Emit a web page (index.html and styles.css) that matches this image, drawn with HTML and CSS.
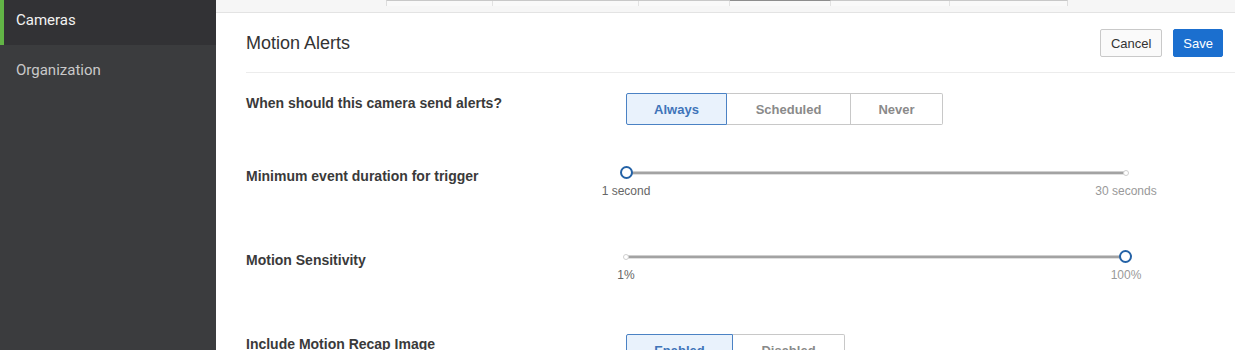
FILE: index.html
```html
<!DOCTYPE html>
<html lang="en">
<head>
    <meta charset="UTF-8">
    <title>Motion Alerts</title>
    <link rel="stylesheet" href="styles.css">
</head>
<body>
    <div class="sidebar">
        <div class="nav-item active">Cameras</div>
        <div class="nav-item">Organization</div>
    </div>

    <div class="main">
        <div class="top-strip">
            <div class="tabs">
                <span class="tab t1"></span>
                <span class="tab t2"></span>
                <span class="tab t3"></span>
                <span class="tab t4 selected"></span>
                <span class="tab t5"></span>
                <span class="tab t6"></span>
            </div>
        </div>

        <div class="panel">
            <div class="panel-header">
                <h1>Motion Alerts</h1>
                <div class="actions">
                    <button class="btn">Cancel</button>
                    <button class="btn primary">Save</button>
                </div>
            </div>

            <div class="row first">
                <div class="label">When should this camera send alerts?</div>
                <div class="segmented">
                    <span class="seg on w-always">Always</span>
                    <span class="seg w-scheduled">Scheduled</span>
                    <span class="seg w-never">Never</span>
                </div>
            </div>

            <div class="row">
                <div class="label">Minimum event duration for trigger</div>
                <div class="slider">
                    <div class="track">
                        <span class="knob"></span>
                        <span class="line"></span>
                        <span class="cap"></span>
                    </div>
                    <div class="ends">
                        <span class="end">1 second</span>
                        <span class="end">30 seconds</span>
                    </div>
                </div>
            </div>

            <div class="row">
                <div class="label">Motion Sensitivity</div>
                <div class="slider">
                    <div class="track">
                        <span class="cap"></span>
                        <span class="line"></span>
                        <span class="knob"></span>
                    </div>
                    <div class="ends">
                        <span class="end">1%</span>
                        <span class="end">100%</span>
                    </div>
                </div>
            </div>

            <div class="row">
                <div class="label">Include Motion Recap Image</div>
                <div class="segmented">
                    <span class="seg on w-enabled">Enabled</span>
                    <span class="seg w-disabled">Disabled</span>
                </div>
            </div>
        </div>
    </div>
</body>
</html>
```

FILE: styles.css
```css
html, body {
    height: 100%;
}

body {
    margin: 0;
    display: flex;
    font-family: "Liberation Sans", Arial, sans-serif;
    color: #333;
    background-color: #fff;
    overflow: hidden;
}

/* Sidebar */
.sidebar {
    width: 216px;
    flex-shrink: 0;
    background-color: #3b3c3e;
}

.nav-item {
    height: 45px;
    line-height: 40px;
    padding-left: 16px;
    font-family: Roboto, "Liberation Sans", sans-serif;
    font-size: 15px;
    color: #c9c9c9;
    box-sizing: border-box;
}

.nav-item + .nav-item {
    height: 50px;
    line-height: 50px;
}

.nav-item.active {
    background-color: #323235;
    color: #f2f2f2;
    border-left: 4px solid #62b446;
    padding-left: 12px;
}

/* Main area */
.main {
    flex: 1;
    min-width: 0;
}

.top-strip {
    height: 12px;
    background-color: #f6f6f6;
    border-bottom: 1px solid #e3e3e3;
}

.tabs {
    display: flex;
    margin-left: 170px;
    width: 680px;
    height: 5px;
    border-top: 1px solid #c8c8c8;
    border-left: 1px solid #ddd;
    border-right: 1px solid #ddd;
    background-color: #f9f9f9;
}

.tab {
    height: 5px;
    border-right: 1px solid #e2e2e2;
}

.t1 { width: 105px; }
.t2 { width: 145px; }
.t3 { width: 90px; }
.t4 { width: 100px; }
.t5 { width: 118px; }
.t6 { flex: 1; border-right: none; }

.tab.selected {
    border-top: 1px solid #8d8d8d;
    margin-top: -1px;
}

.panel {
    padding-left: 30px;
}

.panel-header {
    display: flex;
    align-items: center;
    justify-content: space-between;
    height: 59px;
    border-bottom: 1px solid #ececec;
    padding-right: 12px;
}

.panel-header h1 {
    margin: 0;
    font-size: 18px;
    font-weight: normal;
    color: #333;
    padding-top: 1px;
}

.actions {
    display: flex;
    gap: 11px;
    padding-top: 1px;
}

.btn {
    height: 28px;
    padding: 0 10px;
    border: 1px solid #c9c9c9;
    border-radius: 2px;
    background-color: #fafafa;
    font-family: "Liberation Sans", Arial, sans-serif;
    font-size: 13px;
    color: #333;
}

.btn.primary {
    background-color: #1b6fcf;
    border-color: #1b6fcf;
    color: #fff;
    padding: 0 9px;
}

/* Setting rows */
.row {
    display: flex;
    align-items: flex-start;
    margin-bottom: 51px;
}

.row.first {
    margin-top: 20px;
    margin-bottom: 41px;
}

.label {
    width: 380px;
    flex-shrink: 0;
    line-height: 20px;
    font-size: 14px;
    font-weight: bold;
    color: #3a3a3a;
}

.segmented {
    display: flex;
    height: 32px;
}

.seg {
    display: flex;
    align-items: center;
    justify-content: center;
    box-sizing: border-box;
    height: 32px;
    border: 1px solid #c8c8c8;
    border-left: none;
    background-color: #fff;
    font-size: 13px;
    font-weight: bold;
    color: #8a8a8a;
}

.seg:last-child {
    border-radius: 0 2px 2px 0;
}

.seg.on {
    border: 1px solid #4b82c4;
    background-color: #e9f2fc;
    color: #3f74b9;
    border-radius: 2px 0 0 2px;
}

.w-always { width: 101px; }
.w-scheduled { width: 124px; }
.w-never { width: 92px; }
.w-enabled { width: 107px; }
.w-disabled { width: 112px; }

/* Sliders */
.slider {
    width: 500px;
}

.track {
    display: flex;
    align-items: center;
    height: 13px;
}

.line {
    flex: 1;
    height: 2px;
    background-color: #a3a3a3;
    border-top: 1px solid #cfcfcf;
    border-bottom: 1px solid #e0e0e0;
}

.knob {
    width: 13px;
    height: 13px;
    box-sizing: border-box;
    border: 2px solid #2462a6;
    border-radius: 50%;
    background-color: #fff;
    margin: 0 -6px;
    position: relative;
    z-index: 1;
}

.cap {
    width: 6px;
    height: 6px;
    box-sizing: border-box;
    border: 1px solid #cfcfcf;
    border-radius: 50%;
    background-color: #fff;
    margin: 0 -3px;
    position: relative;
    z-index: 1;
}

.ends {
    display: flex;
    justify-content: space-between;
    margin-top: 4px;
}

.end {
    width: 0;
    display: flex;
    justify-content: center;
    white-space: nowrap;
    line-height: 16px;
    font-size: 12px;
    color: #666;
}

.end:last-child {
    color: #999;
}
```
